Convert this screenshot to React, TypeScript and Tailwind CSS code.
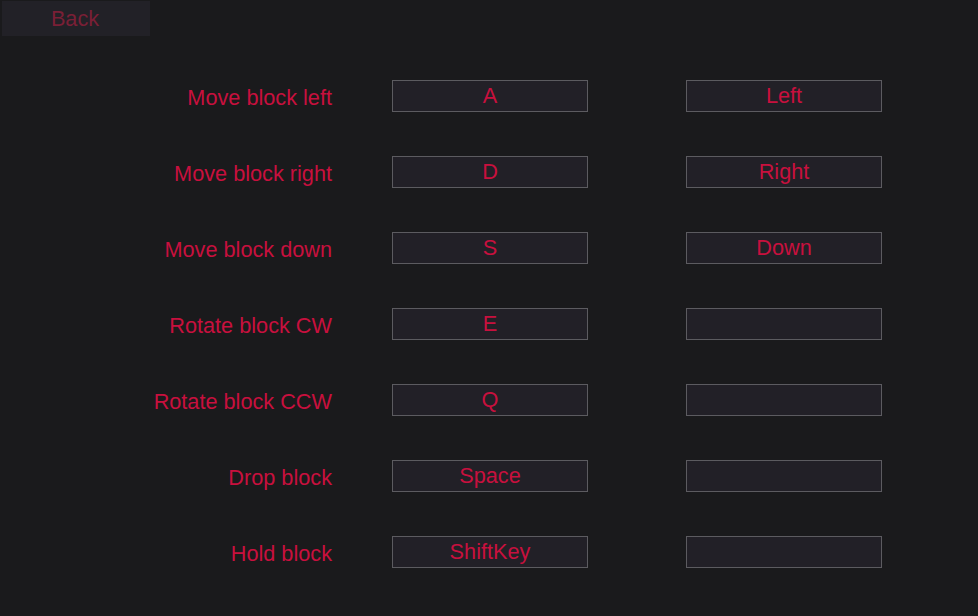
const rows: [string, string, string][] = [
  ['Move block left', 'A', 'Left'],
  ['Move block right', 'D', 'Right'],
  ['Move block down', 'S', 'Down'],
  ['Rotate block CW', 'E', ''],
  ['Rotate block CCW', 'Q', ''],
  ['Drop block', 'Space', ''],
  ['Hold block', 'ShiftKey', ''],
];

function KeyBox({ value }: { value: string }) {
  return (
    <button className="w-[196px] h-[32px] border border-[#5c5b60] bg-[#222027] text-[#c8103e] text-[21.7px] leading-none flex items-center justify-center">
      {value}
    </button>
  );
}

export default function App() {
  return (
    <div
      className="w-[978px] h-[616px] bg-[#1a1a1c] overflow-hidden"
      style={{ fontFamily: '"Liberation Sans", Arial, sans-serif' }}
    >
      <div className="pt-[1px] pl-[2px]">
        <button className="w-[148px] h-[35px] bg-[#222127] text-[#7a1f36] text-[21.7px] leading-none pr-[2px] flex items-center justify-center">
          Back
        </button>
      </div>

      <div className="mt-[44px] flex flex-col gap-[44px]">
        {rows.map(([label, primary, secondary]) => (
          <div key={label} className="flex items-center h-[32px]">
            <span className="w-[332px] text-right text-[#c8103e] text-[21.7px] leading-none pt-[4px]">
              {label}
            </span>
            <div className="ml-[60px]">
              <KeyBox value={primary} />
            </div>
            <div className="ml-[98px]">
              <KeyBox value={secondary} />
            </div>
          </div>
        ))}
      </div>
    </div>
  );
}
